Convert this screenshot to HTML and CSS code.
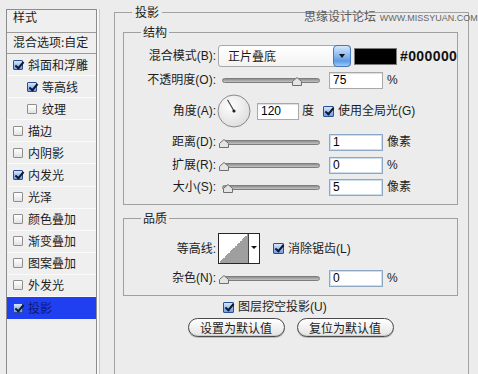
FILE: index.html
```html
<!DOCTYPE html>
<html lang="zh-CN">
<head>
<meta charset="utf-8">
<title>图层样式 - 投影</title>
<link rel="stylesheet" href="styles.css">
</head>
<body>
<div class="page">
  <aside class="sp">
    <div class="sp-head">样式</div>
    <div class="sp-blend">混合选项:自定</div>
    <ul class="sp-list">
      <li class="sp-item"><span class="cb on"></span><span class="sp-text">斜面和浮雕</span></li>
      <li class="sp-item sub"><span class="cb on"></span><span class="sp-text">等高线</span></li>
      <li class="sp-item sub"><span class="cb"></span><span class="sp-text">纹理</span></li>
      <li class="sp-item"><span class="cb"></span><span class="sp-text">描边</span></li>
      <li class="sp-item"><span class="cb"></span><span class="sp-text">内阴影</span></li>
      <li class="sp-item"><span class="cb on"></span><span class="sp-text">内发光</span></li>
      <li class="sp-item"><span class="cb"></span><span class="sp-text">光泽</span></li>
      <li class="sp-item"><span class="cb"></span><span class="sp-text">颜色叠加</span></li>
      <li class="sp-item"><span class="cb"></span><span class="sp-text">渐变叠加</span></li>
      <li class="sp-item"><span class="cb"></span><span class="sp-text">图案叠加</span></li>
      <li class="sp-item"><span class="cb"></span><span class="sp-text">外发光</span></li>
      <li class="sp-item selected"><span class="cb on"></span><span class="sp-text">投影</span></li>
    </ul>
  </aside>

  <fieldset class="frame">
    <legend>投影</legend>

    <fieldset class="group struct">
      <legend>结构</legend>

      <div class="row row-blend">
        <span class="lbl">混合模式(B):</span>
        <div class="select"><span class="select-text">正片叠底</span><span class="select-btn"></span></div>
        <span class="swatch"></span>
        <span class="hex">#000000</span>
      </div>

      <div class="row row-opacity">
        <span class="lbl">不透明度(O):</span>
        <div class="slider"><div class="track"></div><span class="thumb" style="left:71.5px"><svg width="10" height="9" viewBox="0 0 10 9"><polygon points="5,0.5 9.5,4.5 9.5,8.5 0.5,8.5 0.5,4.5" class="thumb-shape"/></svg></span></div>
        <span class="num plain">75</span>
        <span class="unit">%</span>
      </div>

      <div class="row row-angle">
        <span class="lbl">角度(A):</span>
        <svg class="dial" width="34" height="34" viewBox="0 0 34 34">
          <defs>
            <radialGradient id="dialg" cx="0.4" cy="0.35" r="0.7">
              <stop offset="0" stop-color="#ffffff"/>
              <stop offset="1" stop-color="#dcdcdc"/>
            </radialGradient>
          </defs>
          <circle cx="17" cy="17" r="16" fill="url(#dialg)" stroke="#8a8a8a" stroke-width="1"/>
          <line x1="17" y1="17" x2="10.5" y2="5.8" stroke="#444" stroke-width="1.2"/>
          <circle cx="17" cy="17" r="1.6" fill="#222"/>
        </svg>
        <span class="num angle">120</span>
        <span class="unit deg">度</span>
        <span class="cb on big global"></span>
        <span class="cb-text">使用全局光(G)</span>
      </div>

      <div class="row row-dist">
        <span class="lbl">距离(D):</span>
        <div class="slider"><div class="track"></div><span class="thumb" style="left:-1px"><svg width="10" height="9" viewBox="0 0 10 9"><polygon points="5,0.5 9.5,4.5 9.5,8.5 0.5,8.5 0.5,4.5" class="thumb-shape"/></svg></span></div>
        <span class="num">1</span>
        <span class="unit">像素</span>
      </div>

      <div class="row row-spread">
        <span class="lbl">扩展(R):</span>
        <div class="slider"><div class="track"></div><span class="thumb" style="left:-1px"><svg width="10" height="9" viewBox="0 0 10 9"><polygon points="5,0.5 9.5,4.5 9.5,8.5 0.5,8.5 0.5,4.5" class="thumb-shape"/></svg></span></div>
        <span class="num">0</span>
        <span class="unit">%</span>
      </div>

      <div class="row row-size">
        <span class="lbl">大小(S):</span>
        <div class="slider"><div class="track"></div><span class="thumb" style="left:2.5px"><svg width="10" height="9" viewBox="0 0 10 9"><polygon points="5,0.5 9.5,4.5 9.5,8.5 0.5,8.5 0.5,4.5" class="thumb-shape"/></svg></span></div>
        <span class="num">5</span>
        <span class="unit">像素</span>
      </div>
    </fieldset>

    <fieldset class="group quality">
      <legend>品质</legend>

      <div class="row row-contour">
        <span class="lbl">等高线:</span>
        <div class="contour"><span class="contour-prev"></span><span class="contour-btn"></span></div>
        <span class="cb on big anti"></span>
        <span class="cb-text">消除锯齿(L)</span>
      </div>

      <div class="row row-noise">
        <span class="lbl">杂色(N):</span>
        <div class="slider"><div class="track"></div><span class="thumb" style="left:-1px"><svg width="10" height="9" viewBox="0 0 10 9"><polygon points="5,0.5 9.5,4.5 9.5,8.5 0.5,8.5 0.5,4.5" class="thumb-shape"/></svg></span></div>
        <span class="num">0</span>
        <span class="unit">%</span>
      </div>
    </fieldset>

    <div class="knock"><span class="cb on big"></span><span class="cb-text">图层挖空投影(U)</span></div>

    <div class="btns">
      <span class="btn">设置为默认值</span>
      <span class="btn">复位为默认值</span>
    </div>
  </fieldset>

  <div class="wm">思缘设计论坛 <span class="wm-url">WWW.MISSYUAN.COM</span></div>
</div>
</body>
</html>
```
FILE: styles.css
```css
* { box-sizing: border-box; }
html, body { margin: 0; padding: 0; overflow: hidden; }
body {
  width: 478px;
  height: 374px;
  background: #ececec;
  font-family: "Liberation Sans", "Noto Sans CJK SC", sans-serif;
  font-size: 12px;
  color: #1c1c1c;
}
.page {
  position: relative;
  display: flex;
  align-items: flex-start;
  height: 374px;
}

/* ---------- left styles list ---------- */
.sp {
  flex: none;
  margin: 9px 0 0 6px;
  width: 91px;
  height: 365px;
  border: 1px solid #8c8c8c;
  border-bottom: 0;
  background: #efefef;
  box-shadow: 2px 0 0 #f8f8f8, 3px 0 0 #c9c9c9;
}
.sp-head {
  height: 23px;
  padding-left: 6px;
  line-height: 14px;
  border-bottom: 1px solid #9c9c9c;
  font-family: "Noto Sans CJK SC", sans-serif;
}
.sp-blend {
  height: 21px;
  padding: 1px 0 0 6px;
  line-height: 16px;
  border-bottom: 1px solid #9c9c9c;
  white-space: nowrap;
  font-family: "Noto Sans CJK SC", sans-serif;
}
.sp-list { list-style: none; margin: 0; padding: 0; }
.sp-item {
  display: flex;
  align-items: center;
  height: 22.1px;
  padding-left: 6px;
  border-bottom: 1px solid #fafafa;
  font-family: "Noto Sans CJK SC", sans-serif;
  line-height: 14px;
}
.sp-item.sub { padding-left: 20px; }
.sp-text { margin-left: 5px; white-space: nowrap; }
.sp-item.selected { background: #1f3ff0; border-bottom-color: #1f3ff0; color: #0c1a78; }

/* ---------- checkboxes ---------- */
.cb {
  position: relative;
  flex: none;
  width: 10px;
  height: 10px;
  border: 1px solid #8e8e8e;
  border-radius: 1px;
  background: linear-gradient(#ffffff, #e2e2e2);
}
.cb.on {
  border-color: #2c4e94;
  background: linear-gradient(#d6e6fa, #6e9de0);
}
.cb.on::after {
  content: "";
  position: absolute;
  left: 3px;
  top: -1px;
  width: 3px;
  height: 7px;
  border: solid #0f1733;
  border-width: 0 2px 2px 0;
  transform: rotate(40deg);
}
.cb.big { width: 11px; height: 11px; }
.cb-text { margin-left: 4px; white-space: nowrap; line-height: 14px; }

/* ---------- main frame ---------- */
.frame {
  flex: none;
  margin: 5px 0 0 17px;
  width: 355px;
  height: 369px;
  border: 1px solid #a2a2a2;
  border-bottom: 0;
  padding: 6px 10px 0 8px;
  min-inline-size: 0;
}
.frame > legend {
  margin-left: 9px;
  padding: 0 3px;
  line-height: 14px;
  font-size: 12px;
  font-family: "Noto Sans CJK SC", sans-serif;
}
.group {
  margin: 0;
  border: 1px solid #a0a0a0;
  padding: 6px 0 8px 0;
  min-inline-size: 0;
}
.group > legend {
  margin-left: 17px;
  padding: 0 2px;
  line-height: 14px;
  font-size: 12px;
  font-family: "Noto Sans CJK SC", sans-serif;
}
.quality { margin-top: 6px; padding-top: 8px; }

.row { display: flex; align-items: center; height: 18px; line-height: 14px; }
.row-blend { height: 22px; }
.row-opacity { margin-top: 4px; }
.row-angle { margin-top: 5px; height: 34px; }
.row-dist { margin-top: 5px; }
.row-spread { margin-top: 5px; }
.row-size { margin-top: 4px; }
.row-contour { height: 31px; }
.row-noise { margin-top: 5px; }

.lbl { flex: none; width: 92px; text-align: right; white-space: nowrap; }

/* dropdown */
.select {
  flex: none;
  display: flex;
  margin-left: 2px;
  width: 133px;
  height: 22px;
  border: 1px solid #a8a8a8;
  border-radius: 3px;
  background: linear-gradient(#ffffff, #f3f3f3);
}
.select-text { flex: 1; padding-left: 9px; line-height: 20px; font-family: "Noto Sans CJK SC", sans-serif; }
.select-btn {
  position: relative;
  width: 18px;
  margin: -1px -1px -1px 0;
  border: 1px solid #4677bf;
  border-radius: 4px;
  background: linear-gradient(#d4e7fc, #7fb2ee 55%, #5d9be6 75%, #9fcaf6);
}
.select-btn::after {
  content: "";
  position: absolute;
  left: 5px;
  top: 8px;
  border-top: 4px solid #111;
  border-left: 3px solid transparent;
  border-right: 3px solid transparent;
}
.swatch {
  flex: none;
  margin-left: 3px;
  width: 43px;
  height: 17px;
  background: #000;
  border: 1px solid #7a7a7a;
}
.hex {
  margin-left: 3px;
  font-family: "Liberation Sans", sans-serif;
  font-weight: bold;
  font-size: 14px;
  letter-spacing: 0.4px;
  color: #111;
}

/* sliders */
.slider {
  position: relative;
  flex: none;
  margin: 3px 0 0 4px;
  width: 100px;
  height: 9px;
}
.track {
  margin: 1px 0 0 2px;
  height: 5px;
  border: 1px solid #7d7d7d;
  border-radius: 3px;
  background: linear-gradient(#8e8e8e, #c4c4c4);
}
.thumb { position: absolute; top: 0; width: 10px; height: 9px; }
.thumb svg { display: block; }
.thumb-shape { fill: #e4e4e4; stroke: #6f6f6f; stroke-width: 1; }

/* numeric inputs */
.num {
  flex: none;
  margin-left: 9px;
  width: 54px;
  height: 17px;
  padding-left: 3px;
  line-height: 15px;
  background: #fff;
  border: 1px solid #8ea7c2;
  box-shadow: inset 0 0 0 1px #cfdeee;
  color: #000;
}
.num.plain { border-color: #a9a9a9; box-shadow: inset 0 1px 1px #ddd; }
.unit { margin-left: 4px; white-space: nowrap; }

/* angle */
.dial { flex: none; margin-left: 1px; display: block; }
.num.angle { margin-left: 6px; width: 42px; border-color: #a9a9a9; box-shadow: inset 0 1px 1px #ddd; }
.unit.deg { margin-left: 3px; }
.global { margin-left: 9px; }

/* contour */
.contour {
  flex: none;
  display: flex;
  margin-left: 2px;
  width: 42px;
  height: 31px;
  border: 1px solid #262626;
  background: #fff;
}
.contour-prev {
  width: 30px;
  border-right: 1px solid #444;
  background: linear-gradient(to bottom right, #ffffff 50%, #9f9f9f 50%);
}
.contour-btn { position: relative; flex: 1; }
.contour-btn::after {
  content: "";
  position: absolute;
  left: 2px;
  top: 12px;
  border-top: 3px solid #111;
  border-left: 3px solid transparent;
  border-right: 3px solid transparent;
}
.anti { margin-left: 13px; }

/* bottom */
.knock {
  display: flex;
  align-items: center;
  height: 16px;
  margin: 3px 0 0 100px;
}
.knock .cb-text { margin-left: 4px; }
.btns {
  display: flex;
  justify-content: center;
  gap: 12px;
  margin-top: 3px;
}
.btn {
  width: 97px;
  height: 19px;
  border: 1px solid #4a4a4a;
  border-radius: 10px;
  background: linear-gradient(#ffffff, #e4e4e4);
  box-shadow: inset 0 -1px 0 #c8c8c8, 0 1px 0 #bdbdbd;
  text-align: center;
  line-height: 17px;
  font-family: "Noto Sans CJK SC", sans-serif;
  white-space: nowrap;
}

/* watermark overlay */
.wm {
  position: absolute;
  left: 304px;
  top: 9px;
  line-height: 14px;
  font-family: "Noto Sans CJK SC", sans-serif;
  font-size: 12px;
  color: #5a5a5a;
  white-space: nowrap;
}
.wm-url {
  font-family: "Liberation Sans", sans-serif;
  font-size: 9px;
  color: #666;
  margin-left: 1px;
}
```
